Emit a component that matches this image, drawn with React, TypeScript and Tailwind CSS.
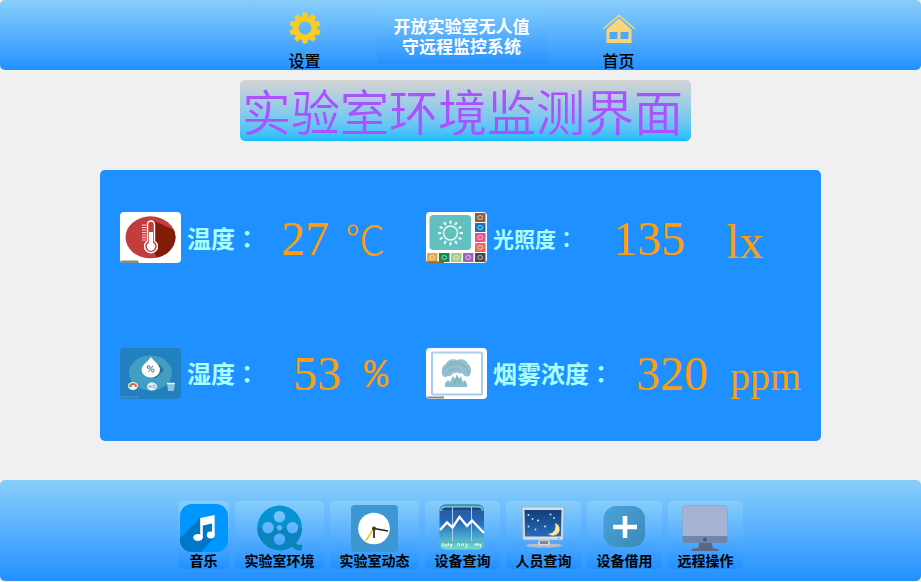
import type { ReactNode } from "react";

function GearIcon() {
  const teeth = [0, 36, 72, 108, 144, 180, 216, 252, 288, 324];
  return (
    <svg viewBox="0 0 32 32" className="size-8" aria-hidden="true">
      <g fill="#f8cd20">
        {teeth.map((a) => (
          <path key={a} d="M12.600 7 L13.800 0.500 H18.200 L19.400 7 Z" transform={`rotate(${a} 16 16)`} />
        ))}
      </g>
      <circle cx="16" cy="16" r="9.300" fill="none" stroke="#f8cd20" strokeWidth="5.600" />
    </svg>
  );
}

function HouseIcon() {
  return (
    <svg viewBox="0 0 34 32" className="h-8 w-[34px]" aria-hidden="true">
      <path d="M1 17 L17 3.500 L33 17" fill="none" stroke="#fbd675" strokeWidth="1.500" />
      <path d="M17 6.500 L29.500 17.500 V31 H4.500 V17.500 Z" fill="#fbd675" />
      <path d="M7.500 20h8v7h-8z M18.500 20h8v7h-8z" fill="#4da9fb" />
    </svg>
  );
}

function ThermometerIcon() {
  return (
    <svg viewBox="0 0 61 51" className="h-[51px] w-[61px] shrink-0" aria-hidden="true">
      <defs>
        <clipPath id="thermo-disc">
          <ellipse cx="30.500" cy="25.300" rx="25" ry="21" />
        </clipPath>
      </defs>
      <rect width="61" height="51" rx="4" fill="#fff" />
      <g clipPath="url(#thermo-disc)">
        <rect width="61" height="51" fill="#c13d3e" />
        <path d="M34 9 L61 21 V51 H40 L34 40 Z" fill="#801c08" />
      </g>
      <path
        d="M27.500 12.500 a3.500 3.500 0 0 1 7 0 V29 a6.400 6.400 0 1 1 -7 0 Z"
        fill="#c13d3e"
        stroke="#fff"
        strokeWidth="1.400"
      />
      <circle cx="31" cy="34.500" r="4.200" fill="#fff" />
      <path d="M31 20 V34" stroke="#fff" strokeWidth="4" />
      <path d="M22 13h4M22 15.500h4M22 18h4M22 20.500h4M22 23h4M22 25.500h4M22 28h4" stroke="#f3d8d8" strokeWidth="1" />
      <path d="M1 48.500 h17 l1 2.500 h-17 z" fill="#8a8a8a" />
    </svg>
  );
}

function SunRays({ x, y, scale }: { x: number; y: number; scale: number }) {
  const rays = [0, 30, 60, 90, 120, 150, 180, 210, 240, 270, 300, 330];
  return (
    <g transform={`translate(${x} ${y}) scale(${scale})`}>
      <circle r="7" fill="none" stroke="#e9fbfa" strokeWidth="1.500" />
      {rays.map((a) => (
        <path key={a} d="M0 -9.300 V-12.500" stroke="#fff" strokeWidth="2" transform={`rotate(${a})`} />
      ))}
    </g>
  );
}

function LightIcon() {
  const tiles = [
    { x: 49, y: 1, c: "#8a6140" },
    { x: 49, y: 11, c: "#1277bd" },
    { x: 49, y: 21, c: "#ef4f8b" },
    { x: 49, y: 31, c: "#ee6a50" },
    { x: 49, y: 41, c: "#4a4a50" },
    { x: 37, y: 41, c: "#a062bd" },
    { x: 25, y: 41, c: "#a8cb82" },
    { x: 13, y: 41, c: "#108b48" },
    { x: 1, y: 41, c: "#e3a743" },
  ];
  return (
    <svg viewBox="0 0 61 51" className="h-[51px] w-[61px] shrink-0" aria-hidden="true">
      <rect width="61" height="51" rx="4" fill="#fff" />
      <rect x="3.500" y="3" width="41.500" height="35" rx="4" fill="#62c0be" />
      <SunRays x={24.5} y={21} scale={1} />
      {tiles.map((t) => (
        <g key={t.c}>
          <rect x={t.x} y={t.y} width="10.500" height="9" fill={t.c} />
          <ellipse cx={t.x + 5.2} cy={t.y + 4.5} rx="2.400" ry="2" fill="none" stroke="#fff" strokeWidth="1" opacity="0.6" />
        </g>
      ))}
      <path d="M1 49.500 h17 v1.500 h-17 z" fill="#8c6a35" />
    </svg>
  );
}

function HumidityIcon() {
  return (
    <svg viewBox="0 0 61 51" className="h-[51px] w-[61px] shrink-0" aria-hidden="true">
      <rect width="61" height="51" rx="4" fill="#2280c0" />
      <ellipse cx="30.500" cy="25" rx="21.500" ry="17.500" fill="#429fc3" />
      <path d="M39 16 L44 22 L36 30 L28 28 Z" fill="#286f9c" />
      <path d="M31 9 C33.500 13 40 17 40 21.500 a9.200 8 0 0 1 -18.400 0 C21.600 17 28.500 13 31 9 Z" fill="#fff" />
      <g stroke="#456f89" strokeWidth="1" fill="none">
        <circle cx="28.600" cy="19" r="1.400" />
        <circle cx="32.800" cy="22.500" r="1.400" />
        <path d="M33 18 L28.500 23.500" />
      </g>
      <ellipse cx="13" cy="38" rx="5" ry="4" fill="#eef4f5" />
      <path d="M10 39 a3 3 0 0 1 6 0" stroke="#e6694a" strokeWidth="2" fill="none" />
      <path d="M10 39 l2 -2" stroke="#4caf73" strokeWidth="1.500" />
      <ellipse cx="32" cy="38.500" rx="5" ry="4" fill="#f2f7fa" />
      <path d="M29 37v3M29 38.500h2M31 37v3M33 37h2v3h-2z" stroke="#6fa3c4" strokeWidth="0.800" fill="none" />
      <path d="M47 35 h8 l-1.200 8 h-5.600 z" fill="#8cc4dd" />
      <path d="M47 35.500 h8" stroke="#eaf6fb" strokeWidth="1.500" />
      <path d="M1 49 h18" stroke="#6f9db7" strokeWidth="1" strokeDasharray="2 1" />
    </svg>
  );
}

function SmokeIcon() {
  return (
    <svg viewBox="0 0 61 51" className="h-[51px] w-[61px] shrink-0" aria-hidden="true">
      <rect width="61" height="51" rx="4" fill="#fff" />
      <rect x="6" y="4.500" width="50" height="42" rx="1" fill="#fff" stroke="#a9cdee" strokeWidth="2" />
      <path
        d="M16 26 C15 21 17 17 20 16 C21 12 27 10 31 12 C35 10 41 12 42 16 C45 18 46 23 44 27 C42 30 37 28 36 25 C32 27 33 23 29 25 C27 24 26 29 22 28 C20 30 16 29 16 26 Z"
        fill="#95bed3"
      />
      <path
        d="M18 22 C22 16 26 15 31 18 M24 15 C30 13 36 16 39 20 M20 26 C24 21 28 20 33 22 M33 15 C38 15 42 20 42 25"
        stroke="#7eb2a8"
        strokeWidth="1"
        fill="none"
      />
      <path d="M19 39 V35 L22 32 L24 34 L27 28 L29 31 L31 26 L33 31 L35 28 L37 34 L39 32 L41 36 V39 Z" fill="#8dbcd0" />
      <path d="M28 37 L31 29 L34 36" stroke="#78aba2" strokeWidth="1" fill="none" />
      <path d="M1 48.500 h17 v2 h-16 z" fill="#8b8987" />
    </svg>
  );
}

function Glyph({ children }: { children: ReactNode }) {
  return (
    <svg viewBox="0 0 48 48" className="size-12 shrink-0" aria-hidden="true">
      {children}
    </svg>
  );
}

function MusicIcon() {
  return (
    <Glyph>
      <defs>
        <clipPath id="music-tile">
          <rect width="48" height="48" rx="12" />
        </clipPath>
      </defs>
      <g clipPath="url(#music-tile)">
        <rect width="48" height="48" fill="#0096ff" />
        <path d="M20 14 L0 34 V48 H21 L34 34 V11 Z" fill="#0077c9" />
      </g>
      <path
        fillRule="evenodd"
        d="M20.200 14 L34.600 11 V31 H32 V19.500 L22.800 21.500 V34 H20.200 Z"
        fill="#fff"
      />
      <ellipse cx="18" cy="33.500" rx="4.800" ry="3.400" fill="#fff" />
      <ellipse cx="30.800" cy="31" rx="4" ry="3.400" fill="#fff" />
    </Glyph>
  );
}

function ReelIcon() {
  return (
    <Glyph>
      <defs>
        <linearGradient id="reel" x1="0" y1="0" x2="0" y2="1">
          <stop offset="0.500" stopColor="#0593d1" />
          <stop offset="0.500" stopColor="#0b84bd" />
        </linearGradient>
      </defs>
      <path
        fillRule="evenodd"
        fill="url(#reel)"
        d="M23.500 1.500 a22.700 22.500 0 0 1 16.500 37.800 C41.500 41 43.500 41 46.500 40.500 L45.500 46.500 C41 47 39 45.500 36 43 A22.700 22.500 0 1 1 23.500 1.500 Z
        M23.500 7 a5.700 5.700 0 1 0 0.010 0 Z M23.500 29.500 a5.700 5.700 0 1 0 0.010 0 Z
        M12 18 a5.700 5.700 0 1 0 0.010 0 Z M36.500 18 a5.700 5.700 0 1 0 0.010 0 Z
        M23.500 21.300 a2.600 2.600 0 1 0 0.010 0 Z"
      />
    </Glyph>
  );
}

function ClockIcon() {
  return (
    <Glyph>
      <rect y="1" width="47" height="47" rx="4" fill="#3c97d3" />
      <circle cx="23" cy="24.500" r="15.800" fill="#fff" />
      <path d="M23 24 L15 36.500" stroke="#f0c51e" strokeWidth="1.500" />
      <path d="M23 24 V34" stroke="#333" strokeWidth="1.800" />
      <path d="M23 24.500 L37 27" stroke="#222" strokeWidth="1.600" />
      <circle cx="23" cy="24.500" r="2" fill="#3a3a2a" />
    </Glyph>
  );
}

function TrendIcon() {
  return (
    <Glyph>
      <defs>
        <linearGradient id="trend" x1="0" y1="0" x2="0" y2="1">
          <stop offset="0" stopColor="#2a568e" />
          <stop offset="0.380" stopColor="#2467ba" />
          <stop offset="0.650" stopColor="#3f9bcb" />
          <stop offset="1" stopColor="#75dcc8" />
        </linearGradient>
      </defs>
      <rect x="0.500" y="0.500" width="44.500" height="45" rx="6" fill="url(#trend)" />
      <path d="M2 7 C2 3 4 2.500 7 2.500 H38 C42 2.500 43.500 3 43.500 7" fill="none" stroke="#5fc6cf" strokeWidth="1.800" />
      <path d="M5 5 H41" stroke="#1d3f78" strokeWidth="1.500" />
      <path d="M13.500 3 V38 M32.500 3 V38" stroke="#a5cfec" strokeWidth="1" />
      <path d="M1 38 H45" stroke="#58b6bb" strokeWidth="2" />
      <path d="M1 26 L8 18.500 L13.500 23.500 L20.500 13 L28 22 L33 16.500 L45 29" fill="none" stroke="#fff" strokeWidth="2.400" />
      <path
        d="M4 39v3h-1.500 M6 40v2h2v-2 M9.500 39v3 M11 40l1 2 1-2 -1.500 4 M18 42l1.500-3 1.500 3 M22.500 42v-2h2v2 M26 40h2v3h-2 M36 42v-2h2v2 M38 40h2v2 M41.500 40v3"
        stroke="#e8fffb"
        strokeWidth="0.900"
        fill="none"
      />
    </Glyph>
  );
}

function NightMonitorIcon() {
  return (
    <Glyph>
      <defs>
        <linearGradient id="night" x1="0" y1="0" x2="0" y2="1">
          <stop offset="0" stopColor="#103f7d" />
          <stop offset="1" stopColor="#286bb9" />
        </linearGradient>
      </defs>
      <ellipse cx="24" cy="41.500" rx="18" ry="2" fill="#b9bfca" />
      <path d="M19 35 H29 L30 41 H18 Z" fill="#d5dae2" />
      <path d="M20 37 H28 V40 H20 Z" fill="#7e889b" />
      <path d="M2 3 H44 L43 36 H3 Z" fill="#d9dde4" stroke="#9babc0" strokeWidth="0.800" />
      <path d="M4.500 6 H41.500 L41 32.500 H5 Z" fill="url(#night)" />
      <path d="M35 19 a7 6.500 0 1 1 -7.500 10.500 C33 31 37 25 35 19 Z" fill="#ffe889" />
      <g fill="#cfe3fa">
        <circle cx="8.500" cy="11" r="1" />
        <circle cx="12.500" cy="15" r="0.900" />
        <circle cx="18" cy="16.500" r="1.100" />
        <circle cx="30.500" cy="10.500" r="1" />
        <circle cx="34" cy="14" r="0.900" />
        <circle cx="8.500" cy="22.500" r="0.900" />
        <circle cx="15.500" cy="25.500" r="0.900" />
        <circle cx="25" cy="22.500" r="1" />
      </g>
      <circle cx="38.500" cy="34.500" r="0.800" fill="#6d7c93" />
    </Glyph>
  );
}

function PlusIcon() {
  return (
    <Glyph>
      <defs>
        <linearGradient id="plus" x1="0" y1="0" x2="1" y2="1">
          <stop offset="0" stopColor="#4aa3dc" />
          <stop offset="1" stopColor="#3a8ab6" />
        </linearGradient>
      </defs>
      <rect x="2.500" y="2" width="41.500" height="41" rx="13" fill="url(#plus)" />
      <path d="M24 12 V34 M12 23 H36" stroke="#fff" strokeWidth="4.600" />
    </Glyph>
  );
}

function DesktopIcon() {
  return (
    <Glyph>
      <path d="M17.500 38 H29.500 L31 44 L36.500 45 V47 H9.500 V45 L16 44 Z" fill="#5b6782" />
      <rect x="0.500" y="1.500" width="45" height="37.500" rx="3" fill="#7085ab" />
      <path d="M3.500 1.500 H42.500 a3 3 0 0 1 3 3 V32 H0.500 V4.500 a3 3 0 0 1 3 -3 Z" fill="#a4b2d4" />
      <circle cx="23" cy="35.500" r="1.900" fill="#495674" />
    </Glyph>
  );
}

interface Reading {
  id: string;
  name: string;
  nameClass: string;
  value: string;
  valueClass: string;
  unit: string;
  unitClass: string;
  icon: ReactNode;
}

const readings: Reading[] = [
  {
    id: "temperature",
    name: "温度",
    nameClass: "w-[94px] text-2xl",
    value: "27",
    valueClass: "w-16",
    unit: "℃",
    unitClass: "text-[40px] font-light font-['Liberation_Serif','Noto_Sans_CJK_SC',serif]",
    icon: <ThermometerIcon />,
  },
  {
    id: "light",
    name: "光照度",
    nameClass: "w-[120px] text-[21px]",
    value: "135",
    valueClass: "w-[113px]",
    unit: "lx",
    unitClass: "text-5xl font-['Liberation_Serif',serif]",
    icon: <LightIcon />,
  },
  {
    id: "humidity",
    name: "湿度",
    nameClass: "w-[106px] text-2xl",
    value: "53",
    valueClass: "w-[71px]",
    unit: "%",
    unitClass: "text-[40px] font-['Liberation_Mono',monospace]",
    icon: <HumidityIcon />,
  },
  {
    id: "smoke",
    name: "烟雾浓度",
    nameClass: "w-[143px] text-2xl",
    value: "320",
    valueClass: "w-[94px]",
    unit: "ppm",
    unitClass: "text-[40px] font-['Liberation_Serif',serif]",
    icon: <SmokeIcon />,
  },
];

const actions = [
  { label: "音乐", width: "w-[51px]", icon: <MusicIcon /> },
  { label: "实验室环境", width: "w-[89px]", icon: <ReelIcon /> },
  { label: "实验室动态", width: "w-[89px]", icon: <ClockIcon /> },
  { label: "设备查询", width: "w-[75px]", icon: <TrendIcon /> },
  { label: "人员查询", width: "w-[75px]", icon: <NightMonitorIcon /> },
  { label: "设备借用", width: "w-[75px]", icon: <PlusIcon /> },
  { label: "远程操作", width: "w-[75px]", icon: <DesktopIcon /> },
];

function ReadingRow({ r }: { r: Reading }) {
  return (
    <div className="flex items-center">
      {r.icon}
      <label htmlFor={r.id} className={`ml-1.5 shrink-0 pt-0.5 font-bold whitespace-nowrap text-[#aaffff] ${r.nameClass}`}>
        {r.name}
        <span className="font-['Noto_Sans_CJK_TC',sans-serif]">：</span>
      </label>
      <output id={r.id} className="flex items-center leading-none text-[#ff9d0a]">
        <span className={`shrink-0 pt-0.5 text-5xl leading-none font-['Liberation_Serif',serif] ${r.valueClass}`}>
          {r.value}
        </span>
        <span className={`pt-2 leading-none ${r.unitClass}`}>{r.unit}</span>
      </output>
    </div>
  );
}

export default function App() {
  return (
    <div className="flex min-h-screen flex-col bg-[#f0f0f0] pb-px font-['Liberation_Sans','Noto_Sans_CJK_SC',sans-serif] text-black">
      <header className="flex h-[70px] items-center justify-center gap-8 rounded-[5px] bg-linear-to-b from-[#87cefa] to-[#1e90ff] pl-0.5">
        <button type="button" className="flex w-20 flex-col items-center gap-2.5 pt-3 text-base leading-4 font-medium">
          <GearIcon />
          设置
        </button>
        <div className="flex h-[58px] w-[170px] flex-col items-center justify-center rounded-xs bg-linear-to-b from-[#80cbfb] to-[#2291ff] pt-1.5 text-center text-[17px] leading-5 font-bold text-white">
          <span className="whitespace-nowrap">开放实验室无人值</span>
          <span className="whitespace-nowrap">守远程监控系统</span>
        </div>
        <button type="button" className="flex w-20 flex-col items-center gap-2.5 pt-3 text-base leading-4 font-medium">
          <HouseIcon />
          首页
        </button>
      </header>

      <main className="flex flex-1 flex-col px-[100px] pt-2.5 pb-[39px]">
        <div className="flex justify-center pl-2.5">
          <h1 className="h-[61px] w-[451px] rounded-[5px] bg-linear-to-b from-[#d3d3d3] to-[#00bfff] pl-0.5 text-[49px] leading-[68px] font-[350] whitespace-nowrap text-[#ab52ff]">
            实验室环境监测界面
          </h1>
        </div>
        <section className="mt-[29px] grid min-h-[271px] flex-1 grid-cols-[306fr_395fr] grid-rows-2 rounded-[5px] bg-[#1e90ff] pl-5">
          {readings.map((r) => (
            <ReadingRow key={r.id} r={r} />
          ))}
        </section>
      </main>

      <footer className="flex justify-center gap-1.5 rounded-[5px] bg-linear-to-b from-[#87cefa] to-[#1e90ff] pt-[21px] pb-3">
        {actions.map((a) => (
          <button
            key={a.label}
            type="button"
            className={`flex h-[68px] flex-col items-center rounded-[5px] bg-linear-to-b from-[#87cefa] to-[#1e90ff] pt-[3px] text-sm leading-[18px] font-bold whitespace-nowrap ${a.width}`}
          >
            {a.icon}
            {a.label}
          </button>
        ))}
      </footer>
    </div>
  );
}
